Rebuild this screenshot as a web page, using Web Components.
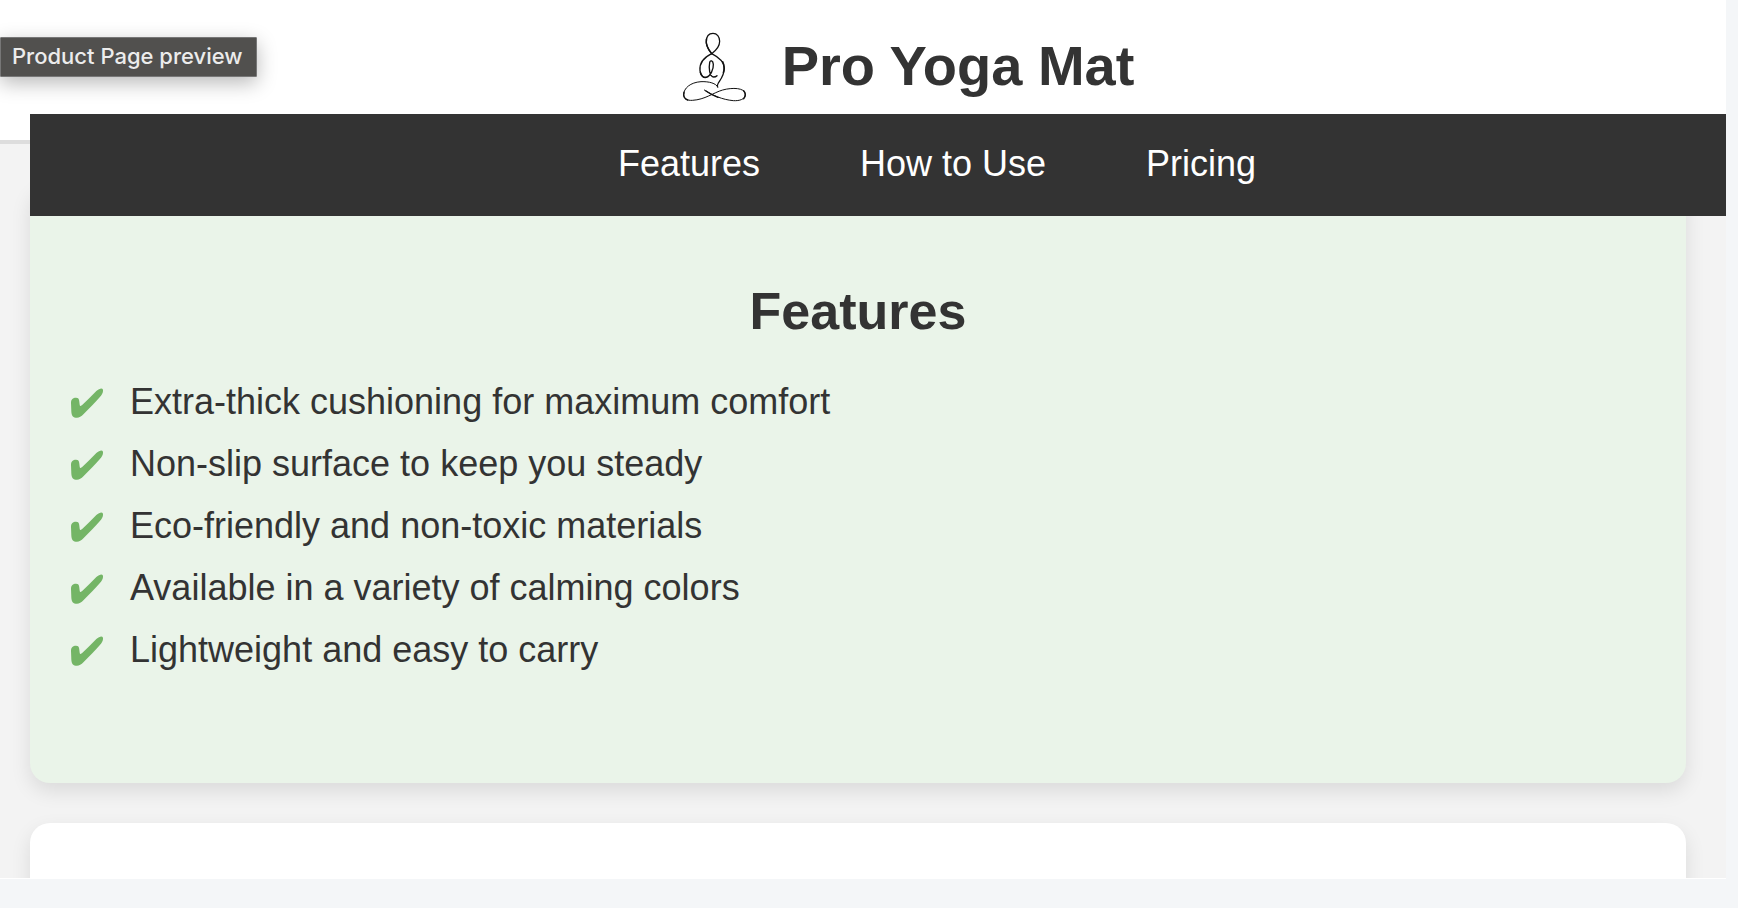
<!DOCTYPE html>
<html lang="en">
<head>
<meta charset="utf-8">
<meta name="viewport" content="width=device-width, initial-scale=1">
<title>Pro Yoga Mat</title>
<style>
  html, body { margin: 0; }
  body {
    background: #f4f6f8;
    color: #333;
    font-family: "Liberation Sans", Arial, sans-serif;
    font-size: 36px;
  }
</style>
</head>
<body>
<preview-pane>
  <preview-tooltip slot="tooltip">Product Page preview</preview-tooltip>
  <site-header>Pro Yoga Mat</site-header>
  <main>
    <site-nav>
      <nav-link target="#features">Features</nav-link>
      <nav-link target="#how-to-use">How to Use</nav-link>
      <nav-link target="#pricing">Pricing</nav-link>
    </site-nav>
    <content-card id="features" tone="green" heading="Features">
      <check-list>
        <check-item>Extra-thick cushioning for maximum comfort</check-item>
        <check-item>Non-slip surface to keep you steady</check-item>
        <check-item>Eco-friendly and non-toxic materials</check-item>
        <check-item>Available in a variety of calming colors</check-item>
        <check-item>Lightweight and easy to carry</check-item>
      </check-list>
    </content-card>
    <content-card id="how-to-use"></content-card>
  </main>
</preview-pane>

<script>
const define = (name, html, setup) => {
  const template = document.createElement('template');
  template.innerHTML = html;
  customElements.define(name, class extends HTMLElement {
    constructor() {
      super();
      this.attachShadow({ mode: 'open' }).append(template.content.cloneNode(true));
    }
    connectedCallback() {
      if (setup) setup(this, this.shadowRoot);
    }
  });
};

define('preview-pane', `
  <style>
    :host {
      display: block; position: relative; box-sizing: border-box;
      height: calc(100vh - 29px); margin-right: 12px; overflow: hidden;
      background: #f3f3f3; border-bottom: 1px solid #fff;
    }
    ::slotted(main) { display: block; padding: 0 40px 40px 30px; }
  </style>
  <slot></slot><slot name="tooltip"></slot>`);

define('preview-tooltip', `
  <style>
    :host {
      position: absolute; left: 0; top: 37px; z-index: 3;
      box-sizing: border-box; height: 40px; padding: 0 14px 0 11px;
      border: 1px solid #777; border-radius: 1px; background: #51504e; color: #ececec;
      font: 500 22px/36px Inter, sans-serif; white-space: nowrap;
      box-shadow: 0 6px 20px rgba(0, 0, 0, .28);
    }
  </style>
  <slot></slot>`);

define('site-header', `
  <style>
    :host { display: block; background: #fff; border-bottom: 4px solid #ddd; }
    header {
      display: flex; justify-content: center; align-items: center; gap: 12px;
      height: 130px; padding: 0 0 10px 68px;
    }
    svg { width: 110px; height: 110px; flex: none; }
    h1 { margin: 0; padding-top: 2px; font-size: 56px; line-height: 64px; }
  </style>
  <header>
    <svg viewBox="0 0 330 330" fill="none" stroke="#111" stroke-linecap="round" stroke-linejoin="round" aria-hidden="true">
      <path stroke-width="3.8" d="M155 131C145 119 139 109 139 95C139 79 147 70 159 70C171 70 179 80 179 94C179 110 169 121 155 131"/>
      <path stroke-width="4" d="M155 131C128 144 118 162 120 182C122 197 130 204 139 202C151 199 161 178 160 163C159 151 151 149 149 158C146 173 148 201 161 201C166 201 169 199 171 197"/>
      <path stroke-width="3.8" d="M155 131C177 142 193 155 193 175C193 195 183 207 175 219C172 224 171 228 173 231"/>
      <path stroke-width="3" d="M173 231C169 220 147 214 123 215C91 217 71 235 71 254C71 266 81 272 97 271C135 269 160 248 188 240C217 232 254 233 256 252C257 268 238 273 220 272C187 269 157 256 133 240"/>
      <path stroke-width="4.4" d="M139 88C136 106 147 121 155 131M188 155C192 164 194 176 190 188M72 247C69 258 74 267 83 270M251 242C258 249 257 260 251 266M138 243C149 251 163 258 174 262M121 187C123 198 131 204 139 202"/>
    </svg>
    <h1><slot></slot></h1>
  </header>`);

define('site-nav', `
  <style>
    :host { display: block; position: relative; z-index: 2; margin: -30px -40px 0 0; }
    nav {
      display: flex; justify-content: center; align-items: center; gap: 100px;
      height: 102px; padding: 0 0 2px 118px; box-sizing: border-box; background: #333;
    }
  </style>
  <nav><slot></slot></nav>`);

define('nav-link', `
  <style>
    :host { display: block; }
    a { color: #fff; text-decoration: none; line-height: 42px; white-space: nowrap; }
  </style>
  <a><slot></slot></a>`, (host, root) => {
  root.querySelector('a').href = host.getAttribute('target');
});

define('content-card', `
  <style>
    :host {
      display: block; box-sizing: border-box; min-height: 200px; margin-bottom: 40px; padding: 40px;
      border-radius: 20px; background: #fff; box-shadow: 0 8px 20px rgba(0, 0, 0, .1);
    }
    :host([tone="green"]) { margin-top: -32px; padding: 97px 40px 112px; background: #eaf4e9; }
    h2 { margin: 0 0 40px; font-size: 52px; line-height: 60px; text-align: center; }
    h2:empty { display: none; }
  </style>
  <section><h2></h2><slot></slot></section>`, (host, root) => {
  root.querySelector('h2').textContent = host.getAttribute('heading') || '';
});

define('check-list', `
  <style>
    :host { display: flex; flex-direction: column; gap: 20px; }
  </style>
  <slot></slot>`, host => host.setAttribute('role', 'list'));

define('check-item', `
  <style>
    :host { display: flex; align-items: center; gap: 26px; line-height: 42px; }
    svg { width: 34px; height: 34px; flex: none; }
  </style>
  <svg viewBox="0 0 102 102" aria-hidden="true">
    <path fill="#74b566" d="M3 54C3 42 9 38 18 38C26 38 27 42 28 50C29 58 29 64 32 63C36 62 60 37 79 18C87 11 95 8 98 12C101 17 98 26 93 32C77 51 57 71 41 87C32 96 25 100 17 98C7 96 5 90 4 80Z"/>
  </svg>
  <span><slot></slot></span>`, host => host.setAttribute('role', 'listitem'));
</script>
</body>
</html>
